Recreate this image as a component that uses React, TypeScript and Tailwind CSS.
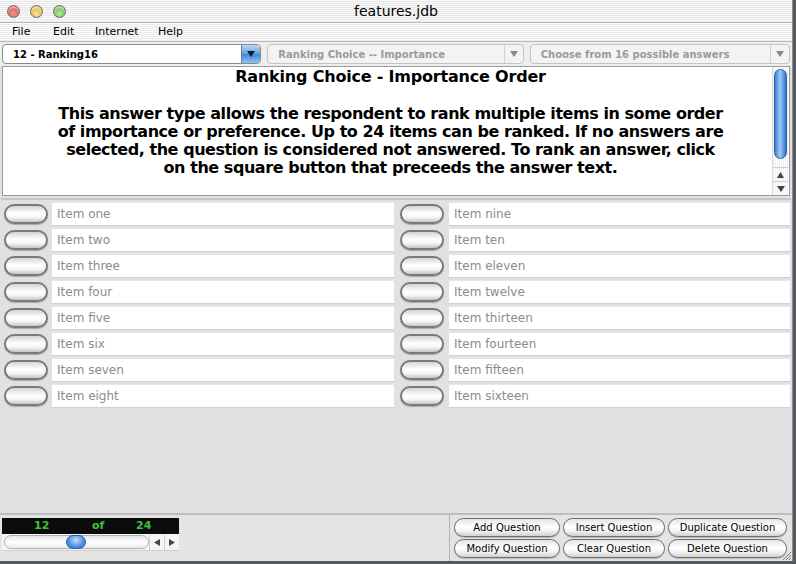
import React from "react";

const LEFT = ["Item one", "Item two", "Item three", "Item four", "Item five", "Item six", "Item seven", "Item eight"];
const RIGHT = ["Item nine", "Item ten", "Item eleven", "Item twelve", "Item thirteen", "Item fourteen", "Item fifteen", "Item sixteen"];
const BUTTONS = [
  ["Add Question", "Insert Question", "Duplicate Question"],
  ["Modify Question", "Clear Question", "Delete Question"],
];
const LINES = [
  "This answer type allows the respondent to rank multiple items in some order",
  "of importance or preference. Up to 24 items can be ranked. If no answers are",
  "selected, the question is considered not answered. To rank an answer, click",
  "on the square button that preceeds the answer text.",
];

function Light({ color }: { color: string }) {
  return (
    <div className={`w-[13px] h-[13px] rounded-full border border-[#6b6b6b] ${color} shadow-[inset_0_2px_2px_rgba(255,255,255,0.6)]`} />
  );
}

function Arrow({ color = "#555" }: { color?: string }) {
  return (
    <svg width="8" height="6" viewBox="0 0 8 6">
      <path d="M0 0 L8 0 L4 6 Z" fill={color} />
    </svg>
  );
}

function Dropdown({ label, active, w }: { label: string; active?: boolean; w: string }) {
  return (
    <div className={`${w} h-[20px] flex items-center rounded-[4px] border ${active ? "border-[#8a8a8a] bg-white" : "border-[#c4c4c4] bg-[#f3f3f3]"}`}>
      <span className={`flex-1 pl-[10px] text-[10px] font-bold ${active ? "text-black" : "text-[#9a9a9a]"}`}>{label}</span>
      {active ? (
        <div className="w-[19px] h-[18px] flex items-center justify-center rounded-r-[3px] bg-[linear-gradient(#bcd8f5,#5f9ee2_50%,#3f86d6_51%,#8fc1f0)] border-l border-[#5a7fae]">
          <Arrow color="#0a1a33" />
        </div>
      ) : (
        <div className="w-[19px] h-[18px] flex items-center justify-center border-l border-[#d0d0d0]">
          <Arrow color="#8a8a8a" />
        </div>
      )}
    </div>
  );
}

function Oval() {
  return (
    <div className="w-[44px] h-[20px] rounded-full border-[2px] border-[#7a7a7a] bg-[linear-gradient(#d4d4d4,#ffffff_45%,#f6f6f6_70%,#c6c6c6)] shadow-[0_1px_1px_rgba(0,0,0,0.25)]" />
  );
}

function Row({ text, left }: { text: string; left: boolean }) {
  return (
    <div className="h-[26px] flex items-center">
      <div className={`${left ? "w-[51px]" : "w-[52px]"} pl-[3px] h-[26px] flex items-center`}>
        <Oval />
      </div>
      <div className={`flex-1 h-[24px] bg-white border-t border-b border-t-[#e8e8e8] border-b-[#cfcfcf] flex items-center pl-[5px] text-[12px] text-[#8c8c8c] ${left ? "mr-[3px]" : "mr-[1px]"}`}>
        {text}
      </div>
    </div>
  );
}

function Pill({ label }: { label: string }) {
  return (
    <div className="h-[19px] flex-1 flex items-center justify-center rounded-full border-[1.5px] border-[#6f6f6f] bg-[linear-gradient(#e4e4e4,#ffffff_45%,#f4f4f4_70%,#cfcfcf)] text-[10px] text-black shadow-[0_1px_1px_rgba(0,0,0,0.2)]">
      {label}
    </div>
  );
}

export default function App() {
  return (
    <div className="w-[796px] h-[564px] bg-[#55585c] overflow-hidden font-['Lucida_Grande','DejaVu_Sans',sans-serif]">
      <div className="w-[793px] h-[561px] flex flex-col bg-[#e1e1e3] border-r border-[#8d8d8d]">
        {/* Title bar */}
        <div className="h-[22px] relative flex items-center bg-[repeating-linear-gradient(0deg,#e9e9e9_0px,#e9e9e9_1px,#f8f8f8_1px,#f8f8f8_2px)]">
          <div className="flex gap-[10px] pl-[7px] pt-[1px]">
            <Light color="bg-[radial-gradient(circle_at_50%_70%,#f49a8e,#c8352a)]" />
            <Light color="bg-[radial-gradient(circle_at_50%_70%,#fbe29a,#d99a1c)]" />
            <Light color="bg-[radial-gradient(circle_at_50%_70%,#b6eea0,#3fa52a)]" />
          </div>
          <div className="absolute inset-0 flex items-center justify-center text-[14px] text-black pt-[1px]">features.jdb</div>
        </div>
        {/* Menu bar */}
        <div className="h-[20px] flex items-center text-[11px] text-black border-t border-[#9a9a9a] border-b border-[#b8b8b8] bg-[repeating-linear-gradient(0deg,#ececec_0px,#ececec_1px,#f9f9f9_1px,#f9f9f9_2px)]">
          <span className="ml-[12px] w-[41px]">File</span>
          <span className="w-[42px]">Edit</span>
          <span className="w-[63px]">Internet</span>
          <span>Help</span>
        </div>
        {/* Dropdowns */}
        <div className="h-[24px] flex items-center gap-[6px] px-[2px] bg-[#eeeeee]">
          <Dropdown w="w-[261px]" label="12 - Ranking16" active />
          <Dropdown w="w-[258px]" label="Ranking Choice -- Importance" />
          <Dropdown w="w-[262px]" label="Choose from 16 possible answers" />
        </div>
        {/* Description */}
        <div className="h-[130px] mx-[2px] flex bg-white border border-[#9b9b9b]">
          <div className="flex-1 flex flex-col items-center text-black font-bold">
            <div className="text-[16px] leading-[20px] pl-[6px] tracking-[-0.2px]">Ranking Choice - Importance Order</div>
            <div className="h-[18px]" />
            {LINES.map((l) => (
              <div key={l} className="text-[16px] leading-[18px] whitespace-nowrap tracking-[-0.45px] pl-[6px]">{l}</div>
            ))}
          </div>
          <div className="w-[16px] mr-[1px] flex flex-col border-l border-[#d8d8d8] bg-[repeating-linear-gradient(90deg,#f0f0f0_0px,#f0f0f0_1px,#ffffff_1px,#ffffff_2px)]">
            <div className="mt-[2px] mx-[1px] h-[90px] rounded-full border border-[#2f5e9c] bg-[linear-gradient(90deg,#3c7fd4,#9fcaf5_45%,#6aa6ea_70%,#2f6fc4)]" />
            <div className="flex-1" />
            <div className="h-[14px] flex items-center justify-center border-t border-[#cfcfcf]">
              <svg width="7" height="6" viewBox="0 0 7 6"><path d="M0 6 L7 6 L3.5 0 Z" fill="#444" /></svg>
            </div>
            <div className="h-[14px] flex items-center justify-center border-t border-[#cfcfcf]">
              <Arrow color="#444" />
            </div>
          </div>
        </div>
        {/* Items */}
        <div className="mt-[2px] mx-[1px] border-t-[2px] border-[#c6c6c6] pt-[1px] flex">
          <div className="w-[396px] flex flex-col">
            {LEFT.map((t) => <Row key={t} text={t} left />)}
          </div>
          <div className="flex-1 flex flex-col">
            {RIGHT.map((t) => <Row key={t} text={t} left={false} />)}
          </div>
        </div>
        <div className="flex-1" />
        {/* Bottom */}
        <div className="h-[48px] flex border-t-[2px] border-[#bdbdbd] bg-[#e4e4e4]">
          <div className="w-[177px] ml-[2px] pt-[3px] flex flex-col">
            <div className="h-[16px] bg-[#0c0c0c] flex items-center text-[11px] font-bold text-[#3cc43c]">
              <span className="ml-[32px] w-[58px]">12</span>
              <span className="w-[44px]">of</span>
              <span>24</span>
            </div>
            <div className="h-[17px] flex items-center bg-[#f4f4f4] border-b border-[#cfcfcf]">
              <div className="flex-1 h-[14px] ml-[2px] relative rounded-full border border-[#b2b2b2] bg-[linear-gradient(#e6e6e6,#ffffff_50%,#ececec)]">
                <div className="absolute left-[61px] top-[-1px] w-[20px] h-[14px] rounded-full border border-[#2b5da3] bg-[radial-gradient(ellipse_at_50%_35%,#c3e0fb,#4b8ee0_60%,#2f6dc0)]" />
              </div>
              <div className="w-[15px] h-[15px] flex items-center justify-center border-l border-[#cfcfcf]">
                <svg width="6" height="7" viewBox="0 0 6 7"><path d="M6 0 L6 7 L0 3.5 Z" fill="#444" /></svg>
              </div>
              <div className="w-[15px] h-[15px] flex items-center justify-center border-l border-[#cfcfcf]">
                <svg width="6" height="7" viewBox="0 0 6 7"><path d="M0 0 L0 7 L6 3.5 Z" fill="#444" /></svg>
              </div>
            </div>
          </div>
          <div className="flex-1" />
          <div className="w-[343px] relative flex flex-col gap-[2px] pt-[3px] pl-[4px] pr-[5px] border-l border-[#b5b5b5]">
            {BUTTONS.map((row, i) => (
              <div key={i} className="flex gap-[3px]">
                <div className="w-[106px] flex"><Pill label={row[0]} /></div>
                <div className="w-[102px] flex"><Pill label={row[1]} /></div>
                <div className="flex-1 flex"><Pill label={row[2]} /></div>
              </div>
            ))}
            <svg className="absolute right-[0px] bottom-[0px]" width="12" height="12" viewBox="0 0 12 12">
              <path d="M11 3 L3 11 M11 6 L6 11 M11 9 L9 11" stroke="#777" strokeWidth="1" />
            </svg>
          </div>
        </div>
      </div>
    </div>
  );
}
